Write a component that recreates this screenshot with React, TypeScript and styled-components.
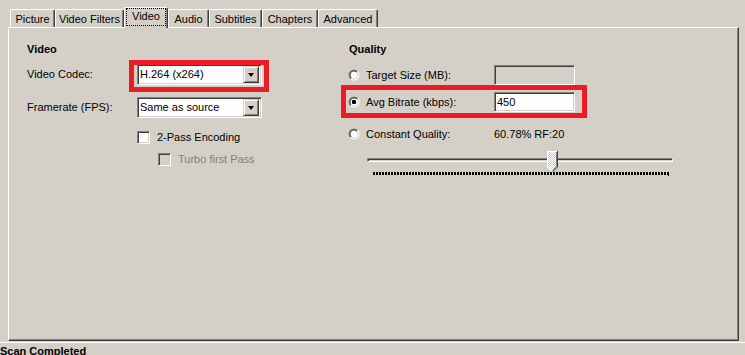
import React from "react";
import styled, { createGlobalStyle } from "styled-components";

const GlobalStyle = createGlobalStyle`
  html, body { margin: 0; padding: 0; background: #d4d0c8; }
  body {
    font-family: "Liberation Sans", Arial, sans-serif;
    font-size: 11px;
    color: #000;
  }
`;

const Window = styled.div`
  width: 745px;
  height: 355px;
  overflow: hidden;
  background: #d4d0c8;
`;

const TabStrip = styled.div`
  display: flex;
  align-items: flex-end;
  height: 27px;
  padding-left: 10px;
  position: relative;
  z-index: 1;
`;

const Tab = styled.div<{ $w: number; $active?: boolean }>`
  box-sizing: border-box;
  width: ${(p) => p.$w}px;
  height: ${(p) => (p.$active ? 21 : 18)}px;
  margin-bottom: ${(p) => (p.$active ? -1 : 0)}px;
  border-top: 1px solid #fff;
  border-left: 1px solid #fff;
  border-right: 1px solid #404040;
  box-shadow: inset -1px 0 #808080;
  border-radius: 2px 2px 0 0;
  background: #d4d0c8;
  display: flex;
  align-items: ${(p) => (p.$active ? "stretch" : "center")};
  justify-content: center;
  padding-top: ${(p) => (p.$active ? 0 : 1)}px;
  line-height: 13px;
  white-space: nowrap;
`;

const FocusLabel = styled.span`
  flex: 1;
  margin: 0 1px 2px 1px;
  border: 1px dotted #000;
  display: flex;
  align-items: center;
  justify-content: center;
  padding-bottom: 1px;
`;

const Panel = styled.div`
  box-sizing: border-box;
  margin-left: 8px;
  width: 731px;
  height: 314px;
  border: 1px solid;
  border-color: #fff #404040 #404040 #fff;
  box-shadow: inset -1px -1px #808080;
  padding: 15px 0 0 18px;
  display: grid;
  grid-template-columns: 321px 1fr;
  align-content: start;
`;

const Column = styled.div`
  display: flex;
  flex-direction: column;
  align-items: flex-start;
`;

const SectionTitle = styled.div`
  font-weight: bold;
  line-height: 13px;
  height: 13px;
  margin-bottom: 8px;
  padding-left: ${(p: { $indent?: number }) => p.$indent ?? 0}px;
`;

const FormGrid = styled.div`
  display: grid;
  grid-template-columns: 110px 125px;
  row-gap: 12px;
  align-items: center;
`;

const Label = styled.span`
  line-height: 13px;
  white-space: nowrap;
`;

const Highlight = styled.div`
  position: relative;
`;

const Annot = styled.span<{ $t: number; $r: number; $b: number; $l: number }>`
  position: absolute;
  top: ${(p) => p.$t}px;
  right: ${(p) => p.$r}px;
  bottom: ${(p) => p.$b}px;
  left: ${(p) => p.$l}px;
  border: 5px solid #ed1c24;
  pointer-events: none;
`;

const Sunken = styled.div<{ $w: number; $h: number; $disabled?: boolean }>`
  box-sizing: border-box;
  width: ${(p) => p.$w}px;
  height: ${(p) => p.$h}px;
  border: 1px solid;
  border-color: #808080 #fff #fff #808080;
  box-shadow: inset 1px 1px #404040, inset -1px -1px #d4d0c8;
  background: ${(p) => (p.$disabled ? "#d4d0c8" : "#fff")};
  display: flex;
  align-items: center;
  padding: 0 2px 0 2px;
  line-height: 13px;
  white-space: nowrap;
`;

const DropButton = styled.span`
  box-sizing: border-box;
  margin-left: auto;
  width: 16px;
  height: 17px;
  border: 1px solid;
  border-color: #d4d0c8 #404040 #404040 #d4d0c8;
  box-shadow: inset 1px 1px #fff, inset -1px -1px #808080;
  background: #d4d0c8;
  display: flex;
  align-items: center;
  justify-content: center;
`;

const Arrow = styled.span`
  width: 0;
  height: 0;
  border-left: 3.5px solid transparent;
  border-right: 3.5px solid transparent;
  border-top: 4px solid #000;
  margin-left: -1px;
`;

const CheckRow = styled.div<{ $indent: number; $mt: number; $disabled?: boolean }>`
  display: flex;
  align-items: center;
  gap: 7px;
  margin-left: ${(p) => p.$indent}px;
  margin-top: ${(p) => p.$mt}px;
  color: ${(p) => (p.$disabled ? "#808080" : "#000")};
  line-height: 13px;
`;

const CheckBox = styled.span<{ $disabled?: boolean }>`
  box-sizing: border-box;
  width: 13px;
  height: 13px;
  border: 1px solid;
  border-color: #808080 #fff #fff #808080;
  box-shadow: inset 1px 1px #404040, inset -1px -1px #d4d0c8;
  background: ${(p) => (p.$disabled ? "#d4d0c8" : "#fff")};
`;

const RadioRow = styled.div<{ $mt: number }>`
  display: grid;
  grid-template-columns: 18px 128px 81px;
  align-items: center;
  height: 20px;
  margin-top: ${(p) => p.$mt}px;
`;

const Slider = styled.div`
  margin-left: 19px;
  margin-top: 7px;
  width: 306px;
`;

const TrackArea = styled.div`
  position: relative;
  height: 21px;
  padding-top: 7px;
  box-sizing: border-box;
`;

const Track = styled.div`
  box-sizing: border-box;
  height: 4px;
  border: 1px solid;
  border-color: #808080 #fff #fff #808080;
  box-shadow: inset 1px 1px #404040;
`;

const Thumb = styled.svg`
  position: absolute;
  top: 0;
`;

const Ticks = styled.div`
  position: relative;
  margin-left: 6px;
  width: 295px;
  height: 3px;
  background: repeating-linear-gradient(
    to right,
    #000 0,
    #000 2px,
    transparent 2px,
    transparent 3px
  );
  &::after {
    content: "";
    position: absolute;
    right: -1px;
    top: 0;
    width: 1px;
    height: 4px;
    background: #000;
  }
`;

const Separator = styled.div`
  height: 1px;
  background: #fff;
  margin-top: 1px;
`;

const Status = styled.div`
  font-weight: bold;
  line-height: 13px;
  padding-top: 2px;
`;

const Radio: React.FC<{ checked?: boolean; id: string }> = ({ checked, id }) => (
  <svg width="12" height="12" viewBox="0 0 12 12">
    <defs>
      <linearGradient id={`o${id}`} x1="0" y1="0" x2="1" y2="1">
        <stop offset="0.5" stopColor="#808080" />
        <stop offset="0.5" stopColor="#ffffff" />
      </linearGradient>
      <linearGradient id={`i${id}`} x1="0" y1="0" x2="1" y2="1">
        <stop offset="0.5" stopColor="#404040" />
        <stop offset="0.5" stopColor="#d4d0c8" />
      </linearGradient>
    </defs>
    <circle cx="6" cy="6" r="5.5" fill={`url(#o${id})`} />
    <circle cx="6" cy="6" r="4.5" fill={`url(#i${id})`} />
    <circle cx="6" cy="6" r="3.5" fill="#fff" />
    {checked && <rect x="4" y="4" width="4" height="4" rx="1" fill="#000" />}
  </svg>
);

const tabs = [
  { label: "Picture", w: 45 },
  { label: "Video Filters", w: 69 },
  { label: "Video", w: 44, active: true },
  { label: "Audio", w: 41 },
  { label: "Subtitles", w: 53 },
  { label: "Chapters", w: 56 },
  { label: "Advanced", w: 60 },
];

const rf = 20;
const rfMax = 51;
const thumbLeft = 6 + ((rfMax - rf) / rfMax) * 295 - 5.5;

export default function App() {
  return (
    <>
      <GlobalStyle />
      <Window>
        <TabStrip>
          {tabs.map((t) => (
            <Tab key={t.label} $w={t.w} $active={t.active}>
              {t.active ? <FocusLabel>{t.label}</FocusLabel> : t.label}
            </Tab>
          ))}
        </TabStrip>
        <Panel>
          <Column>
            <SectionTitle>Video</SectionTitle>
            <FormGrid>
              <Label>Video Codec:</Label>
              <Highlight>
                <Sunken $w={125} $h={21}>
                  H.264 (x264)
                  <DropButton>
                    <Arrow />
                  </DropButton>
                </Sunken>
                <Annot $t={-4} $r={-7} $b={-7} $l={-8} />
              </Highlight>
              <Label>Framerate (FPS):</Label>
              <Sunken $w={125} $h={21}>
                Same as source
                <DropButton>
                  <Arrow />
                </DropButton>
              </Sunken>
            </FormGrid>
            <CheckRow $indent={110} $mt={13}>
              <CheckBox />
              2-Pass Encoding
            </CheckRow>
            <CheckRow $indent={131} $mt={9} $disabled>
              <CheckBox $disabled />
              Turbo first Pass
            </CheckRow>
          </Column>
          <Column>
            <SectionTitle $indent={1}>Quality</SectionTitle>
            <RadioRow $mt={1}>
              <Radio id="a" />
              <Label>Target Size (MB):</Label>
              <Sunken $w={81} $h={20} $disabled />
            </RadioRow>
            <Highlight>
              <RadioRow $mt={7}>
                <Radio id="b" checked />
                <Label>Avg Bitrate (kbps):</Label>
                <Sunken $w={81} $h={20}>450</Sunken>
              </RadioRow>
              <Annot $t={0} $r={-12} $b={-6} $l={-7} />
            </Highlight>
            <RadioRow $mt={12}>
              <Radio id="c" />
              <Label>Constant Quality:</Label>
              <Label>60.78% RF:20</Label>
            </RadioRow>
            <Slider>
              <TrackArea>
                <Track />
                <Thumb
                  width="11"
                  height="21"
                  viewBox="0 0 11 21"
                  style={{ left: thumbLeft }}
                >
                  <defs>
                    <pattern id="dith" width="2" height="2" patternUnits="userSpaceOnUse">
                      <rect width="2" height="2" fill="#d4d0c8" />
                      <rect width="1" height="1" fill="#fff" />
                      <rect x="1" y="1" width="1" height="1" fill="#fff" />
                    </pattern>
                  </defs>
                  <polygon points="0,0 11,0 11,16 5.5,21 0,16" fill="url(#dith)" />
                  <polyline points="0.5,16 0.5,0.5 10,0.5" fill="none" stroke="#fff" />
                  <polyline points="10.5,0 10.5,16 5.5,21" fill="none" stroke="#404040" />
                  <polyline points="9.5,1 9.5,15.5 5.5,19.5" fill="none" stroke="#808080" />
                  <polyline points="0.5,16 5,20.5" fill="none" stroke="#fff" />
                </Thumb>
              </TrackArea>
              <Ticks />
            </Slider>
          </Column>
        </Panel>
        <Separator />
        <Status>Scan Completed</Status>
      </Window>
    </>
  );
}
